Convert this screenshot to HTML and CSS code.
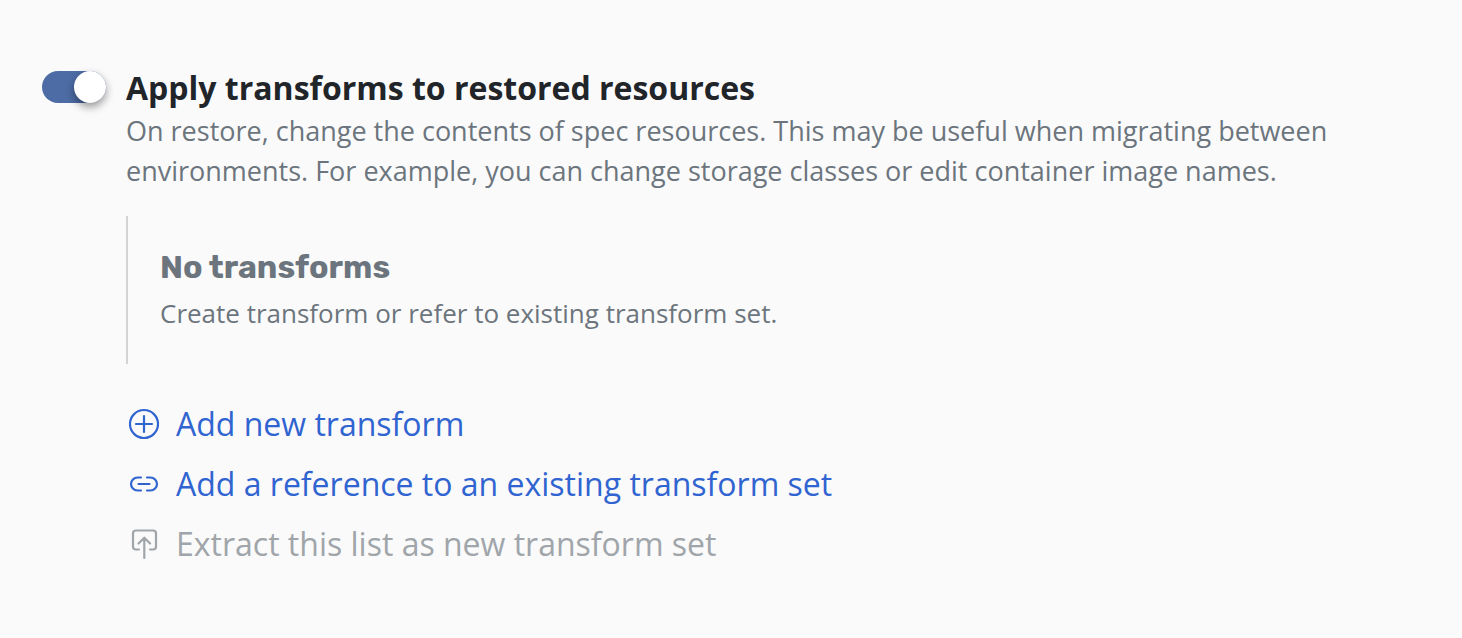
FILE: index.html
```html
<!DOCTYPE html>
<html lang="en">
<head>
    <meta charset="UTF-8">
    <meta name="viewport" content="width=device-width, initial-scale=1.0">
    <title>Restore transforms</title>
    <link rel="stylesheet" href="styles.css">
</head>
<body>

    <main class="transforms">
        <input type="checkbox" role="switch" class="toggle" id="applyTransforms" checked>

        <div class="content">
            <label class="title" for="applyTransforms">Apply transforms to restored resources</label>
            <p class="description">On restore, change the contents of spec resources. This may be useful when migrating between environments. For example, you can change storage classes or edit container image names.</p>

            <!-- Empty list -->
            <section class="empty">
                <h2>No transforms</h2>
                <p>Create transform or refer to existing transform set.</p>
            </section>

            <!-- Actions -->
            <div class="actions">
                <button type="button" class="action">
                    <svg class="icon" viewBox="0 0 36 36" aria-hidden="true">
                        <circle cx="18" cy="18" r="14"/>
                        <path d="M18 10v16M10 18h16"/>
                    </svg>
                    Add new transform
                </button>
                <button type="button" class="action">
                    <svg class="icon" viewBox="0 0 36 36" aria-hidden="true">
                        <path d="M15 11.5H11.5a6.500 6.500 0 0 0 0 13H15M21 11.5h3.500a6.500 6.500 0 0 1 0 13H21M12.500 18h11"/>
                    </svg>
                    Add a reference to an existing transform set
                </button>
                <button type="button" class="action" disabled>
                    <svg class="icon" viewBox="0 0 36 36" aria-hidden="true">
                        <path d="M13 23.500h-3a3 3 0 0 1-3-3V7.500a3 3 0 0 1 3-3h17a3 3 0 0 1 3 3v13a3 3 0 0 1-3 3h-3M18.300 32V12M12.500 17.500l5.800-5.800 5.800 5.800"/>
                    </svg>
                    Extract this list as new transform set
                </button>
            </div>
        </div>
    </main>

</body>
</html>
```
FILE: styles.css
```css
body {
    font-family: 'Open Sans', 'Noto Sans', sans-serif;
    margin: 0;
    background-color: #fafafa;
    color: #212529;
}

.transforms {
    display: flex;
    align-items: flex-start;
    gap: 20px;
    padding: 64px 42px;
}

.toggle {
    appearance: none;
    flex: none;
    display: flex;
    justify-content: flex-end;
    width: 64px;
    height: 32px;
    margin: 7px 0 0;
    border-radius: 16px;
    background: #4d6ca5;
    cursor: pointer;
}

.toggle::before {
    content: "";
    width: 32px;
    height: 32px;
    border-radius: 50%;
    background: white;
    box-shadow: 0 4px 8px rgba(0, 0, 0, 0.4);
}

.toggle:not(:checked) {
    justify-content: flex-start;
    background: #adb5bd;
}

.content {
    flex: 1;
    min-width: 0;
}

.title {
    display: block;
    font-size: 32px;
    line-height: 47px;
    font-weight: bold;
}

.description {
    margin: 0 0 25px;
    font-size: 27px;
    line-height: 40px;
    color: #6c757d;
}

.empty {
    padding: 32px;
    border-left: 2px solid #d3d3d3;
    color: #6c757d;
}

.empty h2 {
    margin: 0 0 8px;
    font-family: Rubik, Inter, sans-serif;
    font-size: 32px;
    line-height: 38px;
    font-weight: bold;
}

.empty p {
    margin: 0;
    font-size: 26px;
    line-height: 38px;
}

.actions {
    display: flex;
    flex-direction: column;
    align-items: flex-start;
    gap: 12px;
    margin-top: 36px;
}

.action {
    display: flex;
    align-items: center;
    gap: 14px;
    padding: 0;
    border: none;
    background: none;
    font-family: inherit;
    font-size: 32px;
    line-height: 48px;
    text-align: left;
    color: #3064d0;
    cursor: pointer;
}

.action:disabled {
    color: #a0a5aa;
    cursor: default;
}

.icon {
    flex: none;
    width: 36px;
    height: 36px;
    fill: none;
    stroke: currentColor;
    stroke-width: 2.2;
    stroke-linecap: round;
    stroke-linejoin: round;
}
```
